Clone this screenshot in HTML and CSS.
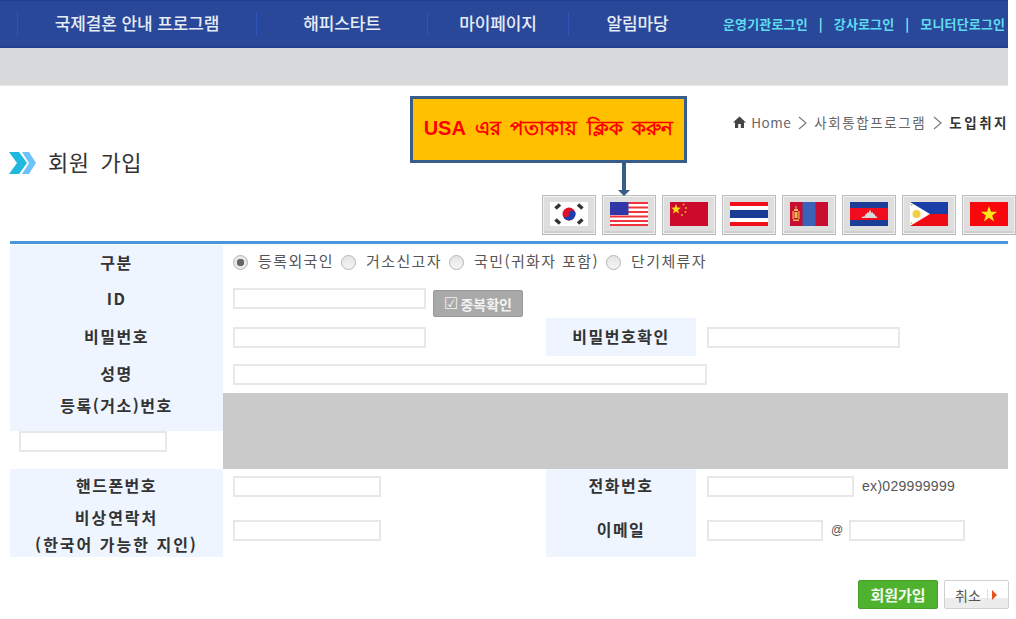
FILE: index.html
```html
<!DOCTYPE html>
<html lang="ko">
<head>
<meta charset="utf-8">
<title>회원 가입</title>
<link rel="stylesheet" href="styles.css">
</head>
<body>
<div class="page">
  <header class="topbar">
    <nav class="nav">
      <a class="nav-item nav-a">국제결혼 안내 프로그램</a>
      <a class="nav-item nav-b">해피스타트</a>
      <a class="nav-item nav-c">마이페이지</a>
      <a class="nav-item nav-d">알림마당</a>
    </nav>
    <div class="logins"><span>운영기관로그인</span><i>|</i><span>강사로그인</span><i>|</i><span>모니터단로그인</span></div>
  </header>
  <div class="subbar"></div>

  <main class="content">
    <div class="crumbs">
      <svg class="home" width="13" height="12" viewBox="0 0 13 12"><path d="M6.500.5 0 6.500h2V12h3.200V8h2.600v4H11V6.500h2z" fill="#444"/></svg>
      <span class="en">Home</span>
      <svg class="gt" width="9" height="14" viewBox="0 0 9 14"><path d="m1 1 7 6-7 6" fill="none" stroke="#777" stroke-width="1.100"/></svg>
      <span class="ko">사회통합프로그램</span>
      <svg class="gt" width="9" height="14" viewBox="0 0 9 14"><path d="m1 1 7 6-7 6" fill="none" stroke="#777" stroke-width="1.100"/></svg>
      <b>도입취지</b>
    </div>

    <h1 class="title">
      <svg width="27" height="22" viewBox="0 0 27 22"><path d="M13 0h7l7 11-7 11h-7l7-11z" fill="#6cc3fa"/><path d="M0 0h10l8 11-8 11H0l8-11z" fill="#20b8dc"/></svg>
      <span>회원 가입</span>
    </h1>

    <div class="flags">
      <button class="flag"><svg viewBox="0 0 38 24"><rect width="38" height="24" fill="#fff"/><circle cx="19" cy="12" r="6.500" fill="#e0102a"/><path d="M12.500 12a3.250 3.250 0 0 0 6.500 0 3.250 3.250 0 0 1 6.500 0 6.500 6.500 0 0 1-13 0z" fill="#1a3fb0"/><g stroke="#333" stroke-width="3.500"><path d="M5.500 6.500 10 2.500M28 2.500l4.500 4M5.500 17.500l4.500 4M28 21.500l4.500-4"/></g></svg></button>
      <button class="flag"><svg viewBox="0 0 38 24"><rect width="38" height="24" fill="#fff"/><path d="M0 1h38M0 5.500h38M0 10h38M0 14.500h38M0 19h38M0 23h38" stroke="#f0343c" stroke-width="2"/><rect width="18.500" height="13" fill="#3038a8"/></svg></button>
      <button class="flag"><svg viewBox="0 0 38 24"><rect width="38" height="24" fill="#cc0a2c"/><path d="m6 2 1.300 3.600 3.700.1-3 2.200 1.100 3.600L6 9.400l-3.100 2.100L4 7.900 1 5.700l3.700-.1z" fill="#f6d810"/><g fill="#e8b020"><circle cx="13.500" cy="2.500" r="1"/><circle cx="16" cy="6" r="1"/><circle cx="15.500" cy="10" r="1"/><circle cx="12" cy="13" r="1"/></g></svg></button>
      <button class="flag"><svg viewBox="0 0 38 24"><rect width="38" height="24" fill="#fff"/><rect width="38" height="4" fill="#f0101c"/><rect y="20" width="38" height="4" fill="#f0101c"/><rect y="8" width="38" height="8" fill="#1a3c94"/></svg></button>
      <button class="flag"><svg viewBox="0 0 38 24"><rect width="38" height="24" fill="#c80c32"/><rect x="12.500" width="13" height="24" fill="#3c62b8"/><path d="M4.500 16h3v-6h-3zM3 17.500h6V19H3zM5.500 4h1v3h1.500v2H4V7h1.500z" fill="#eebc50"/><path d="M2.500 9h1.200v8H2.500zM8.300 9h1.200v8H8.300z" fill="#eebc50"/></svg></button>
      <button class="flag"><svg viewBox="0 0 38 24"><rect width="38" height="24" fill="#1c3e98"/><rect y="6" width="38" height="12" fill="#f00c1c"/><path d="M11 16h16v-1.500h-1.500L24.500 12h-1l-1-2-1 1-1.500-3.500L18.500 11l-1-1-1 2h-1l-1 2.500H13z" fill="#d8d8d8"/></svg></button>
      <button class="flag"><svg viewBox="0 0 38 24"><rect width="38" height="12" fill="#1c3ea8"/><rect y="12" width="38" height="12" fill="#f00c14"/><path d="M0 0l20 12L0 24z" fill="#fff"/><circle cx="6.500" cy="12" r="4" fill="#f0d040"/><circle cx="1.500" cy="3" r="1" fill="#e8c840"/><circle cx="1.500" cy="21" r="1" fill="#e8c840"/></svg></button>
      <button class="flag"><svg viewBox="0 0 38 24"><rect width="38" height="24" fill="#f8080c"/><path d="m19 4 2 5.800h6.200l-5 3.700 1.900 6L19 15.800 13.900 19.500l1.900-6-5-3.700H17z" fill="#fbe818"/></svg></button>
    </div>

    <div class="rule"></div>

    <form class="form">
      <div class="label">구분</div>
      <div class="cell span3 radios">
        <label><input type="radio" name="kind" class="radio" checked><span>등록외국인</span></label>
        <label><input type="radio" name="kind" class="radio"><span>거소신고자</span></label>
        <label><input type="radio" name="kind" class="radio"><span>국민(귀화자 포함)</span></label>
        <label><input type="radio" name="kind" class="radio"><span>단기체류자</span></label>
      </div>

      <div class="label">ID</div>
      <div class="cell span3 cell-id">
        <input class="field w192" type="text">
        <button type="button" class="dup"><span class="check">☑</span>중복확인</button>
      </div>

      <div class="label">비밀번호</div>
      <div class="cell"><input class="field w192" type="password"></div>
      <div class="label">비밀번호확인</div>
      <div class="cell cell-r"><input class="field w192" type="password"></div>

      <div class="label">성명</div>
      <div class="cell span3"><input class="field w474" type="text"></div>

      <div class="label label-top">등록(거소)번호</div>
      <div class="blocked"></div>
      <div class="cell cell-reg"><input class="field w148" type="text"></div>

      <div class="label">핸드폰번호</div>
      <div class="cell"><input class="field w148" type="text"></div>
      <div class="label">전화번호</div>
      <div class="cell cell-r"><input class="field w147" type="text"><span class="hint">ex)029999999</span></div>

      <div class="label label-two">비상연락처<br>(한국어 가능한 지인)</div>
      <div class="cell"><input class="field w148" type="text"></div>
      <div class="label">이메일</div>
      <div class="cell cell-r"><input class="field w115" type="text"><span class="at">@</span><input class="field w115" type="text"></div>
    </form>

    <div class="actions">
      <button class="btn-join">회원가입</button>
      <button class="btn-cancel"><span>취소</span><i class="sep"></i><i class="tri"></i></button>
    </div>
  </main>

  <aside class="callout">
    <div class="callout-box">USA এর পতাকায় ক্লিক করুন</div>
    <svg class="callout-arrow" width="12" height="33" viewBox="0 0 12 33"><path d="M4 0h4v27h4l-6 6-6-6h4z" fill="#385d8a"/></svg>
  </aside>
</div>
</body>
</html>
```
FILE: styles.css
```css
* { box-sizing: border-box; }
html, body { margin: 0; padding: 0; background: #fff; overflow: hidden; }
body { font-family: "Noto Sans CJK KR", "Noto Sans", sans-serif; color: #333; }
.page { position: relative; width: 1016px; height: 619px; }

.topbar {
  width: 1008px; height: 48px; display: flex; align-items: center;
  background: #2a4899; border-top: 1px solid #1f3f94; border-bottom: 2px solid #23408f;
  padding-left: 17px;
}
.nav { display: flex; flex: none; align-items: center; }
.nav-item {
  display: block; height: 24px; line-height: 22px; text-align: center;
  color: #e6ecf6; font-size: 17px; font-weight: 500; letter-spacing: -.1px;
  border-left: 1px solid #2f55bd;
}
.nav-a { width: 239px; }
.nav-b { width: 171px; }
.nav-c { width: 141px; }
.nav-d { width: 138px; }
.logins {
  display: flex; flex: none; align-items: center; margin-left: 17px; white-space: nowrap;
  color: #5fdcf0; font-size: 13px; font-weight: 700; letter-spacing: .15px;
}
.logins i { font-style: normal; margin: 0 11px; color: #8fe4f2; }

.subbar { width: 1008px; height: 38px; background: #d9dadc; border-bottom: 1px solid #e8e8e8; }

.content { padding-left: 10px; }

.crumbs {
  width: 998px; height: 20px; margin-top: 27px; padding-bottom: 2px;
  display: flex; align-items: center; justify-content: flex-end;
  font-size: 13.500px; color: #666; line-height: 18px;
}
.home { margin-right: 5px; }
.crumbs .en { letter-spacing: .5px; }
.crumbs .ko { letter-spacing: 1.600px; }
.crumbs .gt { margin: 1px 7px 0 7px; }
.crumbs b { color: #333; font-weight: 700; letter-spacing: 2.500px; margin-right: -1px; }

.title {
  margin: 14px 0 0 -1px; height: 32px; display: flex; align-items: center;
  font-size: 22px; font-weight: 400; color: #333; letter-spacing: .6px; word-spacing: 4px;
}
.title svg { margin-right: 12px; }
.title span { margin-top: -4px; }

.flags { margin-top: 16px; height: 40px; display: flex; gap: 6px; justify-content: flex-end; }
.flag {
  width: 54px; height: 40px; padding: 6px 7px 8px; display: block;
  background: #dedede; border: 1px solid #bdbdbd; border-bottom-color: #b4b4b4;
  box-shadow: inset 0 0 0 1px #f2f2f2, inset 0 -3px 0 #cfcfcf;
}
.flag svg { display: block; width: 38px; height: 24px; }

.rule { width: 998px; height: 3px; margin-top: 6px; background: #4a96dc; }

.form {
  width: 998px; margin-top: 1px; display: grid;
  grid-template-columns: 213px 323px 150px 312px;
  grid-template-rows: 36px 37px 38px 37px 38px 38px 34px 54px;
}
.label {
  display: flex; align-items: center; justify-content: center; text-align: center;
  background: #eef5fe; color: #333; font-size: 16px; font-weight: 700; letter-spacing: 1.500px; line-height: 26px;
  padding-bottom: 3px;
}
.label-top { align-items: flex-start; padding-bottom: 0; line-height: 25px; }
.label-two { display: block; padding: 1px 0 0; line-height: 27px; letter-spacing: 2px; }
.cell { display: flex; align-items: center; padding-left: 10px; }
.cell-r { padding-left: 11px; }
.span3 { grid-column: span 3; }
.cell-id { align-items: flex-start; padding-top: 7px; }
.cell-reg { padding: 0 0 0 9px; align-items: flex-start; }
.blocked { grid-column: 2 / 5; grid-row: span 2; background: #cacaca; }

.field { display: block; height: 21px; padding: 0 3px; background: #fff; border: 2px solid #e8e8e8; }
.w192 { width: 193px; }
.w474 { width: 474px; }
.w148 { width: 148px; }
.w147 { width: 147px; }
.w115 { width: 116px; }

.radios { color: #555; font-size: 15px; letter-spacing: 1.400px; padding-bottom: 2px; }
.radios label { display: flex; align-items: center; margin-right: 7px; }
.radios span { margin-top: -4px; }
.radio {
  appearance: none; width: 15px; height: 15px; margin: 0 10px 0 0; border-radius: 50%;
  border: 1px solid #b5b5b5; background: linear-gradient(#e4e4e4, #f5f5f5);
  display: block;
}
.radio:checked { background: radial-gradient(circle, #666 0 3.500px, #e8e8e8 4px); }

.dup {
  height: 27px; width: 90px; margin: 2px 0 0 7px; padding: 0; display: flex; align-items: center; justify-content: center;
  background: #a9a9a9; border: 1px solid #999; border-radius: 2px;
  color: #f2f2f2; font-family: inherit; font-size: 14px; font-weight: 700;
}
.check { margin-right: 2px; font-size: 16px; line-height: 16px; font-family: "DejaVu Sans", sans-serif; }

.hint { margin-left: 8px; color: #555; font-size: 14px; letter-spacing: .3px; font-family: "Liberation Sans", sans-serif; }
.at { margin: 0 11px 0 8px; width: 7px; color: #555; font-size: 12px; font-family: "Liberation Sans", sans-serif; }

.actions { width: 999px; margin-top: 23px; display: flex; justify-content: flex-end; gap: 6px; }
.btn-join {
  width: 80px; height: 29px; padding: 0; background: #4fb22f; border: 1px solid #46a129; border-radius: 2px;
  color: #f4fbef; font-family: inherit; font-size: 15px; font-weight: 700;
}
.btn-cancel {
  width: 65px; height: 29px; padding: 0 0 0 10px; display: flex; align-items: center;
  background: linear-gradient(#fff 0 17px, #ececec 17px); border: 1px solid #d0d0d0; border-radius: 2px;
  color: #555; font-family: inherit; font-size: 14px;
}
.sep { width: 1px; height: 11px; margin: 0 4px 0 6px; background: #ddd; }
.tri { width: 0; height: 0; border-left: 5px solid #e8501c; border-top: 5px solid transparent; border-bottom: 5px solid transparent; }

.callout { position: absolute; left: 410px; top: 96px; width: 277px; }
.callout-box {
  height: 67px; display: flex; align-items: center; justify-content: center;
  background: #ffc000; border: 3px solid #385d8a;
  color: #f00; font-family: "Liberation Sans", "Noto Sans", sans-serif; font-size: 20px; font-weight: 700; white-space: nowrap; word-spacing: 4px;
}
.callout-arrow { display: block; margin: 0 0 0 208px; }
```
